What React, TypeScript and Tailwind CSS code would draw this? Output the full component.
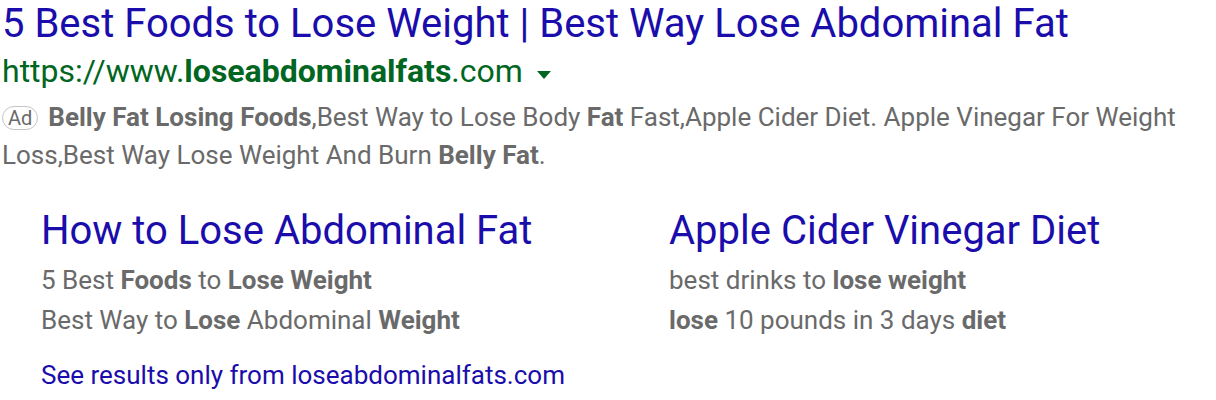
// ── Sitelinks ───────────────────────────────────────────────────────────────
const sitelinks = [
  {
    title: "How to Lose Abdominal Fat",
    lines: [
      [
        ["5 Best ", false],
        ["Foods", true],
        [" to ", false],
        ["Lose Weight", true],
      ],
      [
        ["Best Way to ", false],
        ["Lose", true],
        [" Abdominal ", false],
        ["Weight", true],
      ],
    ],
  },
  {
    title: "Apple Cider Vinegar Diet",
    lines: [
      [
        ["best drinks to ", false],
        ["lose weight", true],
      ],
      [
        ["lose", true],
        [" 10 pounds in 3 days ", false],
        ["diet", true],
      ],
    ],
  },
] as { title: string; lines: [string, boolean][][] }[];

export default function App() {
  return (
    <div
      className="w-[1216px] h-[400px] bg-white overflow-hidden"
      style={{ fontFamily: "Roboto, Arial, sans-serif" }}
    >
      <div className="flex flex-col pl-[2px]">
        {/* Headline */}
        <a className="text-[40px] leading-[48px] text-[#1a0dab] whitespace-nowrap">
          5 Best Foods to Lose Weight | Best Way Lose Abdominal Fat
        </a>

        {/* Display URL */}
        <div className="flex items-center h-[46px] text-[32px] leading-[46px] text-[#006621]">
          <span>
            https://www.<b className="font-bold">loseabdominalfats</b>.com
          </span>
          <span className="ml-[14px] mt-[8px] w-0 h-0 border-l-[7px] border-r-[7px] border-t-[8px] border-l-transparent border-r-transparent border-t-[#006621]" />
        </div>

        {/* Description */}
        <p className="mt-[4px] text-[26px] leading-[38px] text-[#6a6a6a] pr-[30px]">
          <span className="inline-block align-[1px] mr-[10px] rounded-full border border-[#c4c4c4] px-[5px] text-[20px] leading-[22px] text-[#6a6a6a]">
            Ad
          </span>
          <b className="font-bold">Belly Fat Losing Foods</b>,Best Way to Lose Body{" "}
          <b className="font-bold">Fat</b> Fast,Apple Cider Diet. Apple Vinegar For Weight
          Loss,Best Way Lose Weight And Burn <b className="font-bold">Belly Fat</b>.
        </p>

        {/* Sitelinks */}
        <div className="grid grid-cols-[628px_1fr] pl-[39px] mt-[33px]">
          {sitelinks.map((s) => (
            <div key={s.title} className="flex flex-col">
              <a className="text-[40px] leading-[48px] text-[#1a0dab] whitespace-nowrap">
                {s.title}
              </a>
              <div className="mt-[5px] flex flex-col">
                {s.lines.map((line, i) => (
                  <div key={i} className="text-[26px] leading-[40px] text-[#6a6a6a]">
                    {line.map(([t, bold], j) =>
                      bold ? (
                        <b key={j} className="font-bold">
                          {t}
                        </b>
                      ) : (
                        <span key={j}>{t}</span>
                      )
                    )}
                  </div>
                ))}
              </div>
            </div>
          ))}
        </div>

        <a className="pl-[39px] mt-[15px] text-[26px] leading-[40px] text-[#1a0dab] whitespace-nowrap">
          See results only from loseabdominalfats.com
        </a>
      </div>
    </div>
  );
}
